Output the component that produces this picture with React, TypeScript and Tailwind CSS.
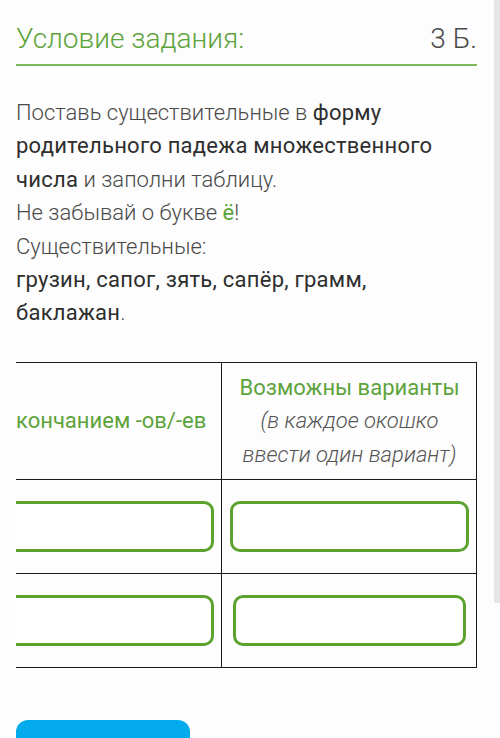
import { useState } from 'react';

const font = { fontFamily: 'Roboto, "Noto Sans", sans-serif' };

// Green answer box; in the first column the left edge scrolls out of view
function AnswerBox({ value, onChange, className }: { value: string; onChange: (v: string) => void; className: string }) {
  return (
    <input
      value={value}
      onChange={(e) => onChange(e.target.value)}
      className={`h-[51px] rounded-[10px] border-[3px] border-[#5ba22f] bg-white outline-none px-3 text-[20px] ${className}`}
    />
  );
}

export default function App() {
  const [answers, setAnswers] = useState<string[]>(['', '', '', '']);
  const setAt = (i: number) => (v: string) =>
    setAnswers((prev) => prev.map((a, j) => (j === i ? v : a)));

  const strong = 'font-normal text-[#2e2e2e] tracking-[0.25px]';

  return (
    <div className="relative h-[738px] w-[500px] overflow-hidden bg-[#fdfdfd]" style={font}>
      <div className="pl-4 pr-[23px]">
        {/* Task heading */}
        <div className="flex items-end justify-between border-b-2 border-[#7cb85a] pt-[20px] pb-[6px]">
          <h1 className="text-[28px] leading-[38px] font-light text-[#5da33c]">Условие задания:</h1>
          <span className="text-[28px] leading-[38px] font-light text-[#4a4a4a]">3 Б.</span>
        </div>

        {/* Instructions */}
        <p className="mt-[30px] text-[22px] leading-[33.4px] font-light text-[#4a4a4a]">
          Поставь существительные в <span className={strong}>форму</span>
          <br />
          <span className={strong}>родительного падежа множественного</span>
          <br />
          <span className={strong}>числа</span> и заполни таблицу.
          <br />
          Не забывай о букве <span className="font-normal text-[#5da33c]">ё</span>!
          <br />
          Существительные:
          <br />
          <span className={strong}>грузин, сапог, зять, сапёр, грамм,</span>
          <br />
          <span className={strong}>баклажан</span>.
        </p>

        {/* Answer table, first column partly scrolled out to the left */}
        <div className="mt-[32px] overflow-hidden">
          <div className="grid grid-cols-[206px_255px] border-t-[1.5px] border-b-[1.5px] border-r-[1.5px] border-[#1a1a1a]">
            <div className="flex h-[116px] items-center overflow-hidden whitespace-nowrap border-r-[1.5px] border-[#1a1a1a] text-[22px] text-[#5da33c]">
              кончанием -ов/-ев
            </div>
            <div className="flex h-[116px] flex-col items-center justify-center text-center text-[22px] leading-[33.4px]">
              <span className="text-[#5da33c]">Возможны варианты</span>
              <span className="italic font-light text-[#555]">(в каждое окошко</span>
              <span className="italic font-light text-[#555]">ввести один вариант)</span>
            </div>

            <div className="flex h-[94px] items-center overflow-hidden border-t-[1.5px] border-r-[1.5px] border-[#1a1a1a]">
              <AnswerBox value={answers[0]} onChange={setAt(0)} className="-ml-[20px] w-[218px] shrink-0" />
            </div>
            <div className="flex h-[94px] items-center border-t-[1.5px] border-[#1a1a1a] px-[8px]">
              <AnswerBox value={answers[1]} onChange={setAt(1)} className="w-full" />
            </div>

            <div className="flex h-[94px] items-center overflow-hidden border-t-[1.5px] border-r-[1.5px] border-[#1a1a1a]">
              <AnswerBox value={answers[2]} onChange={setAt(2)} className="-ml-[20px] w-[218px] shrink-0" />
            </div>
            <div className="flex h-[94px] items-center border-t-[1.5px] border-[#1a1a1a] px-[11px]">
              <AnswerBox value={answers[3]} onChange={setAt(3)} className="w-full" />
            </div>
          </div>
        </div>

        <button className="mt-[52px] h-[48px] w-[174px] rounded-[12px] bg-[#03aaec]" />
      </div>

      {/* Scrollbar thumb */}
      <div className="absolute right-0 top-0 h-[603px] w-[6px] bg-[#e6e6e6]" />
    </div>
  );
}
